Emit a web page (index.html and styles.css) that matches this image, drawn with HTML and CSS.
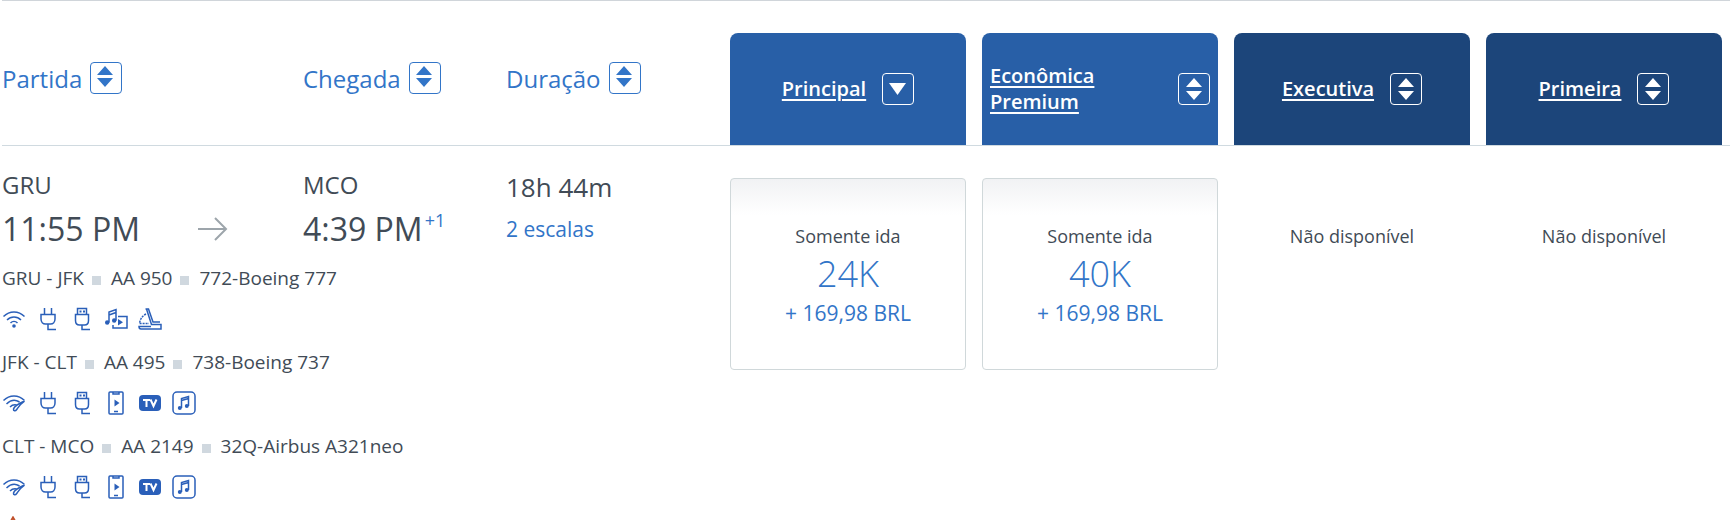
FILE: index.html
```html
<!DOCTYPE html>
<html lang="pt-BR">
<head>
    <meta charset="UTF-8">
    <meta name="viewport" content="width=device-width, initial-scale=1.0">
    <title>Escolha seus voos</title>
    <link rel="stylesheet" href="styles.css">
</head>
<body>
    <!-- Icons used more than once -->
    <svg class="sprite" aria-hidden="true">
        <symbol id="sort" viewBox="0 0 30 30">
            <path d="M6 12l8-9 8 9zM6 15h16l-8 9z"/>
        </symbol>
        <symbol id="sort-fare" viewBox="0 0 30 30">
            <path d="M7 13l8-9 8 9zM7 17h16l-8 9z"/>
        </symbol>
        <symbol id="sort-down" viewBox="0 0 30 30">
            <path d="M6 9h17l-8.500 12z"/>
        </symbol>
        <symbol id="wifi" viewBox="0 0 24 24">
            <path d="M1.500 9.500C7.500 3.500 16.500 3.500 22.500 9.500M5 13c4-4 10-4 14 0M8.500 16c2-2 5-2 7 0"/>
            <circle class="solid" cx="12" cy="19" r="1.800"/>
        </symbol>
        <symbol id="wifi-fast" viewBox="0 0 24 24">
            <path d="M1.500 9.500C7.500 3.500 16.500 3.500 22.500 9.500M4.500 13c4-4 9-4.500 13-2M8 16c2-2 4-2.500 6.500-2M22.500 10c-3.500 1.500-10 5-11 8-.3 2 2 2.200 3 .8 1.500-2 3-5.500 8-8.800z"/>
        </symbol>
        <symbol id="plug" viewBox="0 0 24 24">
            <path d="M8.500 1v6M15.500 1v6M5 7.500h14v4.500c0 3-2 5-4.500 5h-5C7 17 5 15 5 12zM12 17v5.500h8"/>
        </symbol>
        <symbol id="usb" viewBox="0 0 24 24">
            <path d="M7.500 7.500v-6h9v6M5.500 7.500h13v6c0 2.500-1.500 4.500-4 4.500h-5c-2.500 0-4-2-4-4.500zM12 18v4.500h8"/>
            <path class="solid" d="M9.500 3.500h2v2h-2zM13 3.500h2v2h-2z"/>
        </symbol>
        <symbol id="media" viewBox="0 0 24 24">
            <path d="M5 15.500V5l7-2.500v11M5 8l7-2.500M14 9.500h9v11.500H9v-3"/>
            <circle class="solid" cx="3.200" cy="15.500" r="2.200"/>
            <circle class="solid" cx="10.200" cy="13.500" r="2.200"/>
            <path class="solid" d="M14 12l5 3.200-5 3.200z"/>
        </symbol>
        <symbol id="seat" viewBox="0 0 24 24">
            <path d="M7.500 2h3l4.500 13h7M8.500 2l5 15.500h9.500v4.500H3c-1.500 0-2-1-2-2.500h12"/>
            <path stroke-dasharray="2 1" d="M8 7c-4 2-6 5.500-6.500 9.500H11"/>
        </symbol>
        <symbol id="phone" viewBox="0 0 24 24">
            <rect x="5" y="1" width="14" height="22" rx="1"/>
            <path d="M9 1v2h6V1M10 20.500h4"/>
            <path class="solid" d="M10.500 8.500l5 3.500-5 3.500z"/>
        </symbol>
        <symbol id="tv" viewBox="0 0 24 24">
            <rect class="solid" x="1" y="4" width="22" height="16" rx="4"/>
            <path class="cutout" d="M5 9h7M8.500 9v7M12.500 8.500L15.500 15l3-6.500"/>
        </symbol>
        <symbol id="music" viewBox="0 0 24 24">
            <rect x="1" y="1" width="22" height="22" rx="4"/>
            <path d="M9.500 17V7.500l7-2V15M9.500 9.500l7-2"/>
            <circle class="solid" cx="7.800" cy="17" r="2"/>
            <circle class="solid" cx="14.800" cy="15" r="2"/>
        </symbol>
    </svg>

    <main class="results">
        <!-- Column headings -->
        <div class="row heading">
            <div class="trip sorts">
                <div class="sort">
                    <span id="by-departure">Partida</span>
                    <button class="sort-button" type="button" aria-labelledby="by-departure"><svg><use href="#sort"/></svg></button>
                </div>
                <div class="sort">
                    <span id="by-arrival">Chegada</span>
                    <button class="sort-button" type="button" aria-labelledby="by-arrival"><svg><use href="#sort"/></svg></button>
                </div>
                <div class="sort">
                    <span id="by-duration">Duração</span>
                    <button class="sort-button" type="button" aria-labelledby="by-duration"><svg><use href="#sort"/></svg></button>
                </div>
            </div>
            <div class="fares">
                <div class="tab">
                    <a href="#" id="main-cabin">Principal</a>
                    <button class="sort-button" type="button" aria-labelledby="main-cabin"><svg><use href="#sort-down"/></svg></button>
                </div>
                <div class="tab">
                    <a href="#" id="premium-economy">Econômica Premium</a>
                    <button class="sort-button" type="button" aria-labelledby="premium-economy"><svg><use href="#sort-fare"/></svg></button>
                </div>
                <div class="tab dark">
                    <a href="#" id="business">Executiva</a>
                    <button class="sort-button" type="button" aria-labelledby="business"><svg><use href="#sort-fare"/></svg></button>
                </div>
                <div class="tab dark">
                    <a href="#" id="first">Primeira</a>
                    <button class="sort-button" type="button" aria-labelledby="first"><svg><use href="#sort-fare"/></svg></button>
                </div>
            </div>
        </div>

        <!-- Flight -->
        <div class="row flight">
            <div class="details">
                <div class="trip">
                    <div class="departure">
                        <div>
                            <div class="airport">GRU</div>
                            <div class="time">11:55 PM</div>
                        </div>
                        <svg class="arrow" viewBox="0 0 30 24" aria-hidden="true"><path d="M0 12h28M17 1l11 11-11 11"/></svg>
                    </div>
                    <div>
                        <div class="airport">MCO</div>
                        <div class="time">4:39 PM<sup>+1</sup></div>
                    </div>
                    <div>
                        <div class="duration">18h 44m</div>
                        <a class="stops" href="#">2 escalas</a>
                    </div>
                </div>

                <div class="segment">
                    <div class="plane"><span>GRU - JFK</span><span>AA 950</span><span>772-Boeing 777</span></div>
                    <div class="amenities">
                        <svg><use href="#wifi"/></svg>
                        <svg><use href="#plug"/></svg>
                        <svg><use href="#usb"/></svg>
                        <svg><use href="#media"/></svg>
                        <svg><use href="#seat"/></svg>
                    </div>
                </div>
                <div class="segment">
                    <div class="plane"><span>JFK - CLT</span><span>AA 495</span><span>738-Boeing 737</span></div>
                    <div class="amenities">
                        <svg><use href="#wifi-fast"/></svg>
                        <svg><use href="#plug"/></svg>
                        <svg><use href="#usb"/></svg>
                        <svg><use href="#phone"/></svg>
                        <svg><use href="#tv"/></svg>
                        <svg><use href="#music"/></svg>
                    </div>
                </div>
                <div class="segment">
                    <div class="plane"><span>CLT - MCO</span><span>AA 2149</span><span>32Q-Airbus A321neo</span></div>
                    <div class="amenities">
                        <svg><use href="#wifi-fast"/></svg>
                        <svg><use href="#plug"/></svg>
                        <svg><use href="#usb"/></svg>
                        <svg><use href="#phone"/></svg>
                        <svg><use href="#tv"/></svg>
                        <svg><use href="#music"/></svg>
                    </div>
                </div>
                <svg class="warning" viewBox="0 0 22 20" aria-hidden="true"><path d="M11 1.500L21 19H1z"/></svg>
            </div>

            <div class="fares">
                <button class="fare" type="button">
                    <span class="label">Somente ida</span>
                    <span class="miles">24K</span>
                    <span class="taxes">+ 169,98 BRL</span>
                </button>
                <button class="fare" type="button">
                    <span class="label">Somente ida</span>
                    <span class="miles">40K</span>
                    <span class="taxes">+ 169,98 BRL</span>
                </button>
                <div class="fare empty">
                    <span class="label">Não disponível</span>
                </div>
                <div class="fare empty">
                    <span class="label">Não disponível</span>
                </div>
            </div>
        </div>
    </main>
</body>
</html>
```
FILE: styles.css
```css
* {
    box-sizing: border-box;
}
html {
    overflow: hidden;
}
body {
    margin: 0;
    background-color: #fff;
    color: #414b56;
    font-family: "Open Sans", "Noto Sans", sans-serif;
    font-size: 18px;
}
button {
    font-family: inherit;
    cursor: pointer;
}
.sprite {
    display: none;
}
.results {
    margin: 0 4px 0 2px;
}
.row {
    display: grid;
    grid-template-columns: 728fr 1000fr;
}
.trip {
    display: grid;
    grid-template-columns: 301fr 203fr 224fr;
}
.fares {
    display: grid;
    grid-template-columns: repeat(4, 1fr);
    gap: 16px;
    padding-right: 8px;
}

/* Column headings */
.heading {
    padding-top: 32px;
    border-top: 1px solid #d0d5da;
    border-bottom: 1px solid #d0dae0;
}
.sorts {
    align-items: center;
    padding-bottom: 22px;
}
.sort {
    display: flex;
    align-items: center;
    gap: 8px;
    color: #3275c8;
    font-size: 24px;
}
.sort-button {
    flex-shrink: 0;
    width: 32px;
    height: 32px;
    padding: 0;
    border: 1px solid currentColor;
    border-radius: 4px;
    background: none;
    color: inherit;
}
.sort-button svg {
    display: block;
    width: 30px;
    height: 30px;
    fill: currentColor;
}
.tab {
    display: flex;
    justify-content: center;
    align-items: center;
    gap: 16px;
    height: 112px;
    padding: 0 8px;
    border-radius: 8px 8px 0 0;
    background-color: #285fa7;
    color: #fff;
    font-size: 20px;
    font-weight: 600;
    line-height: 26px;
}
.tab.dark {
    background-color: #1c457a;
}
.tab a {
    color: inherit;
    text-decoration-thickness: 2px;
    text-underline-offset: 3px;
}

/* Flight */
.airport {
    margin-top: 20px;
    font-size: 24px;
    line-height: 38px;
}
.time {
    font-size: 32px;
    line-height: 50px;
    white-space: nowrap;
}
.time sup {
    margin-left: 2px;
    color: #3275c8;
    font-size: 18px;
    line-height: 0;
    vertical-align: 14px;
}
.departure {
    display: flex;
}
.arrow {
    align-self: flex-end;
    width: 30px;
    height: 24px;
    margin: 0 0 13px 58px;
    fill: none;
    stroke: #9da5ab;
    stroke-width: 2;
}
.duration {
    margin-top: 20px;
    font-size: 26px;
    line-height: 42px;
}
.stops {
    color: #3275c8;
    font-size: 21px;
    line-height: 42px;
    text-decoration: none;
}
.segment {
    padding-top: 10px;
}
.plane {
    display: flex;
    align-items: center;
    font-size: 19px;
    line-height: 28px;
}
.plane span + span::before {
    content: "";
    display: inline-block;
    width: 9px;
    height: 9px;
    margin: 0 10px 0 8px;
    background-color: #d0d8df;
}
.amenities {
    display: flex;
    gap: 10px;
    padding: 15px 0 7px;
}
.amenities svg {
    width: 24px;
    height: 24px;
    fill: none;
    stroke: #2a5fb9;
    stroke-width: 1.5;
}
.solid {
    fill: #2a5fb9;
    stroke: none;
}
.cutout {
    stroke: #fff;
    stroke-width: 2;
}
.warning {
    display: block;
    width: 22px;
    height: 20px;
    margin-top: 10px;
    fill: none;
    stroke: #c0512c;
    stroke-width: 2;
}
.fare {
    display: flex;
    flex-direction: column;
    align-items: center;
    height: 192px;
    margin-top: 32px;
    padding: 43px 8px 0;
    border: 1px solid #d0d8da;
    border-radius: 4px;
    background: linear-gradient(#f1f2f4, #fff 36px);
    color: #414b56;
}
.fare.empty {
    border-color: transparent;
    background: none;
}
.label {
    font-size: 18px;
    line-height: 28px;
}
.miles {
    color: #3275c8;
    font-size: 36px;
    font-weight: 300;
    line-height: 48px;
}
.taxes {
    color: #3275c8;
    font-size: 21px;
    line-height: 30px;
}
```
